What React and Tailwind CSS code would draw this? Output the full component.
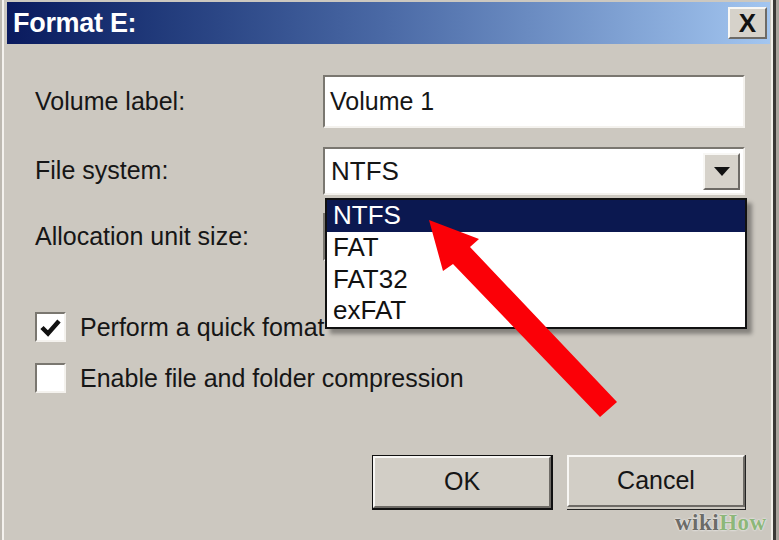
import React from 'react';

const font = { fontFamily: '"Liberation Sans", Arial, sans-serif' };

// sunken 3D field border (classic windows)
const sunken = "border-2 border-t-[#7a7770] border-l-[#7a7770] border-b-[#f4f2ee] border-r-[#f4f2ee]";
const raised = "border-2 border-t-[#f8f7f4] border-l-[#f8f7f4] border-b-[#6e6b66] border-r-[#6e6b66]";

function Checkbox({ checked }) {
  return (
    <div className={`w-[31px] h-[30px] bg-white flex items-center justify-center ${sunken}`}>
      {checked && (
        <svg width="21" height="19" viewBox="0 0 21 19">
          <path d="M2 9.5 L8 15.5 L19 3" fill="none" stroke="#111" strokeWidth="4.5" />
        </svg>
      )}
    </div>
  );
}

function Button({ children, primary }) {
  return (
    <div className={primary ? "border border-[#111] border-b-2 border-r-2" : "border-b border-r border-[#222]"}>
      <div className={`w-[178px] h-[52px] bg-[#d2cec6] flex items-center justify-center text-[25px] text-[#151515] ${raised}`}>
        {children}
      </div>
    </div>
  );
}

export default function App() {
  const options = ['NTFS', 'FAT', 'FAT32', 'exFAT'];

  return (
    <div className="relative w-[779px] h-[540px] overflow-hidden bg-[#ccc8c0] flex" style={font}>
      {/* left frame */}
      <div className="w-[2px] bg-[#bdb9b1]" />
      <div className="w-[2px] bg-[#f4f2ee]" />

      <div className="flex-1 flex flex-col">
        {/* Title bar */}
        <div className="mt-[2px] ml-[3px] mr-[1px] h-[42px] bg-gradient-to-r from-[#0a1a5e] via-[#4b6aa6] to-[#a3c6f0] flex items-center justify-between pl-[6px] pr-[3px]">
          <span className="text-white font-bold text-[27px] tracking-[-0.3px]">Format E:</span>
          <div className={`w-[39px] h-[32px] bg-[#d6d2ca] flex items-center justify-center ${raised}`}>
            <span className="text-[26px] font-bold leading-none text-[#111]">X</span>
          </div>
        </div>

        {/* Body */}
        <div className="flex-1 flex flex-col pl-[31px] pr-[25px] text-[25px] text-[#161616]">
          <div className="mt-[31px] flex items-center h-[53px]">
            <span className="w-[288px]">Volume label:</span>
            <div className={`w-[422px] h-[53px] bg-white flex items-center pl-[5px] ${sunken}`}>
              Volume 1
            </div>
          </div>

          <div className="mt-[19px] flex items-center h-[48px]">
            <span className="w-[288px]">File system:</span>
            <div className={`w-[422px] h-[48px] bg-white flex items-center justify-between pl-[6px] pr-[3px] ${sunken}`}>
              <span className="text-[26px]">NTFS</span>
              <div className={`w-[37px] h-[37px] bg-[#d6d2ca] flex items-center justify-center ${raised}`}>
                <svg width="16" height="9" viewBox="0 0 16 9"><path d="M0 0 H16 L8 9 Z" fill="#111" /></svg>
              </div>
            </div>
          </div>

          <div className="mt-[18px] flex items-center h-[48px]">
            <span className="w-[288px]">Allocation unit size:</span>
            <div className={`w-[422px] h-[48px] bg-white ${sunken}`} />
          </div>

          <div className="mt-[51px] flex flex-col gap-[21px] leading-[30px]">
            <div className="flex items-center gap-[14px]">
              <Checkbox checked />
              <span>Perform a quick fomat</span>
            </div>
            <div className="flex items-center gap-[14px]">
              <Checkbox />
              <span>Enable file and folder compression</span>
            </div>
          </div>

          <div className="mt-[62px] flex justify-end gap-[14px]">
            <Button primary>OK</Button>
            <Button>Cancel</Button>
          </div>
        </div>
      </div>

      {/* right frame */}
      <div className="w-[2px] bg-[#f0eee9]" />
      <div className="w-[3px] bg-[#3a3836]" />
      <div className="w-[3px] bg-[#a9a59e]" />

      {/* open dropdown list */}
      <div className="absolute left-[325px] top-[198px] w-[422px] border-2 border-[#111] bg-white shadow-[5px_5px_4px_rgba(0,0,0,0.35)] text-[26px] leading-[31.5px]">
        {options.map((o, i) => (
          <div key={o} className={i === 0 ? "bg-[#0b1850] text-white pl-[6px] h-[32px]" : "text-[#111] pl-[6px] h-[31.5px]"}>
            {o}
          </div>
        ))}
      </div>

      {/* red arrow */}
      <svg className="absolute left-0 top-0" width="779" height="540" viewBox="0 0 779 540">
        <polygon points="429,220 479,239 470,247 617,402 600,417 453,264 443,271" fill="#fb0007" />
      </svg>

      {/* watermark */}
      <div className="absolute left-[675px] top-[506px] text-[23px] font-bold tracking-[0.5px]" style={{ fontFamily: '"Liberation Serif", serif', textShadow: '0 0 2px #eee, 0 0 2px #eee' }}>
        <span className="text-[#6c6c68]">wiki</span><span className="text-[#8db77a]">How</span>
      </div>
    </div>
  );
}
